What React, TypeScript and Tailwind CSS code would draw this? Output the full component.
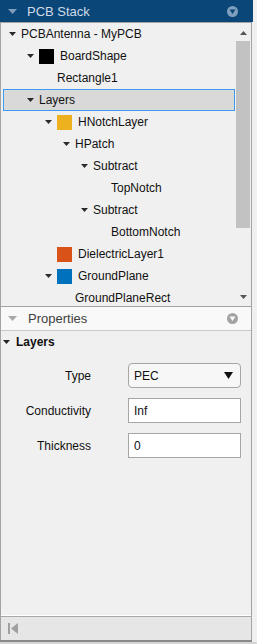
import React from "react";

type Node = {
  label: string;
  level: number;
  expand: boolean;
  color?: string;
  selected?: boolean;
};

const nodes: Node[] = [
  { label: "PCBAntenna - MyPCB", level: 0, expand: true },
  { label: "BoardShape", level: 1, expand: true, color: "bg-[#000000]" },
  { label: "Rectangle1", level: 2, expand: false },
  { label: "Layers", level: 1, expand: true, selected: true },
  { label: "HNotchLayer", level: 2, expand: true, color: "bg-[#edb120]" },
  { label: "HPatch", level: 3, expand: true },
  { label: "Subtract", level: 4, expand: true },
  { label: "TopNotch", level: 5, expand: false },
  { label: "Subtract", level: 4, expand: true },
  { label: "BottomNotch", level: 5, expand: false },
  { label: "DielectricLayer1", level: 2, expand: false, color: "bg-[#d95319]" },
  { label: "GroundPlane", level: 2, expand: true, color: "bg-[#0072bd]" },
  { label: "GroundPlaneRect", level: 3, expand: false },
];

const indent = ["pl-[5px]", "pl-[23px]", "pl-[41px]", "pl-[59px]", "pl-[77px]", "pl-[95px]"];

function Down({ fill = "#2b2b2b", w = 7, h = 4 }: { fill?: string; w?: number; h?: number }) {
  return (
    <svg width={w} height={h} viewBox={`0 0 ${w} ${h}`} className="shrink-0 block">
      <path d={`M0 0H${w}L${w / 2} ${h}Z`} fill={fill} />
    </svg>
  );
}

function Up({ fill = "#555", w = 7, h = 4 }: { fill?: string; w?: number; h?: number }) {
  return (
    <svg width={w} height={h} viewBox={`0 0 ${w} ${h}`} className="shrink-0 block">
      <path d={`M0 ${h}H${w}L${w / 2} 0Z`} fill={fill} />
    </svg>
  );
}

function CircleIcon({ circle, tri }: { circle: string; tri: string }) {
  return (
    <svg width="11" height="11" viewBox="0 0 11 11" className="block">
      <circle cx="5.5" cy="5.5" r="5.5" fill={circle} />
      <path d="M2.5 3.5H8.5L5.5 8Z" fill={tri} />
    </svg>
  );
}

function Row({ n }: { n: Node }) {
  return (
    <div
      className={`h-[22px] ml-[2px] mr-[1px] shrink-0 flex items-center border ${indent[n.level]} ${
        n.selected ? "border-[#3d9cf0] bg-[#d9d9d9]" : "border-transparent"
      }`}
    >
      {n.expand ? (
        <div className="w-[7px] mr-[5px] flex items-center">
          <Down />
        </div>
      ) : (
        <div className="w-[12px] shrink-0" />
      )}
      {n.color && <div className={`w-[15px] h-[15px] mr-[6px] shrink-0 ${n.color}`} />}
      <span className="text-[12px] leading-none text-[#111] whitespace-nowrap">{n.label}</span>
    </div>
  );
}

export default function App() {
  return (
    <div className="w-[257px] h-[644px] bg-[#f0f0f0] overflow-hidden font-['Liberation_Sans',Arial,sans-serif]">
      <div className="w-[252px] flex flex-col">
        {/* PCB Stack header */}
        <div className="w-[253px] h-[22px] bg-[#0a4678] flex items-center">
          <div className="ml-[8px] w-[9px] flex items-center">
            <Down fill="#7f9cbb" w={9} h={5} />
          </div>
          <span className="ml-[10px] text-[13px] leading-none text-[#cfdbe7]">PCB Stack</span>
          <div className="ml-auto mr-[15px]">
            <CircleIcon circle="#7f9fbf" tri="#0a4678" />
          </div>
        </div>

        {/* Tree panel */}
        <div className="border-l border-r border-t border-b border-[#a3a3a3] flex h-[285px]">
          <div className="w-[235px] h-[283px] overflow-hidden flex flex-col">
            {nodes.map((n, i) => (
              <Row key={i} n={n} />
            ))}
          </div>
          <div className="w-[14px] h-[283px] flex flex-col">
            <div className="h-[18px] flex items-center justify-center pt-[1px]">
              <Up />
            </div>
            <div className="h-[187px] bg-[#c2c2c2]" />
            <div className="flex-1" />
            <div className="h-[18px] flex items-center justify-center">
              <Down fill="#555" />
            </div>
          </div>
        </div>

        {/* Properties panel */}
        <div className="border-l border-r border-[#a3a3a3] flex flex-col">
          <div className="h-[23px] bg-[#f9f9f9] border-b border-[#c8c8c8] flex items-center box-content">
            <div className="ml-[7px] w-[9px] flex items-center">
              <Down fill="#a8a8a8" w={9} h={5} />
            </div>
            <span className="ml-[11px] text-[13px] leading-none text-[#404040]">Properties</span>
            <div className="ml-auto mr-[13px]">
              <CircleIcon circle="#a3a3a3" tri="#f9f9f9" />
            </div>
          </div>

          <div className="h-[285px] flex flex-col border-b border-white">
            <div className="h-[22px] flex items-center">
              <div className="ml-[2px] w-[7px] flex items-center">
                <Down fill="#222" />
              </div>
              <span className="ml-[6px] text-[12px] leading-none font-bold text-[#111]">Layers</span>
            </div>

            <div className="mt-[10px] grid grid-cols-[90px_113px] gap-x-[37px] gap-y-[10px] items-center">
              <span className="text-right text-[12px] text-[#111]">Type</span>
              <div className="h-[25px] rounded-[4px] border border-[#a6a6a6] bg-[#f7f7f7] flex items-center pl-[5px] pr-[7px]">
                <span className="text-[12px] text-[#111]">PEC</span>
                <svg width="9" height="7" viewBox="0 0 9 7" className="ml-auto block">
                  <path d="M0 0H9L4.5 7Z" fill="#111" />
                </svg>
              </div>

              <span className="text-right text-[12px] text-[#111]">Conductivity</span>
              <div className="h-[25px] border border-[#a6a6a6] bg-white flex items-center pl-[5px]">
                <span className="text-[12px] text-[#111]">Inf</span>
              </div>

              <span className="text-right text-[12px] text-[#111]">Thickness</span>
              <div className="h-[25px] border border-[#a6a6a6] bg-white flex items-center pl-[5px]">
                <span className="text-[12px] text-[#111]">0</span>
              </div>
            </div>
          </div>

          {/* bottom bar */}
          <div className="h-[24px] bg-[#e6e6e6] border-t border-[#a8a8a8] flex items-center">
            <svg width="11" height="11" viewBox="0 0 11 11" className="ml-[7px] block">
              <rect x="0" y="0" width="2" height="11" fill="#9f9f9f" />
              <path d="M10 0V11L3 5.5Z" fill="#9f9f9f" />
            </svg>
          </div>
        </div>
        <div className="h-[2px] bg-[#8a8a8a] w-[252px]" />
        <div className="h-[2px] bg-[#d4d4d4] w-[257px]" />
      </div>
    </div>
  );
}
